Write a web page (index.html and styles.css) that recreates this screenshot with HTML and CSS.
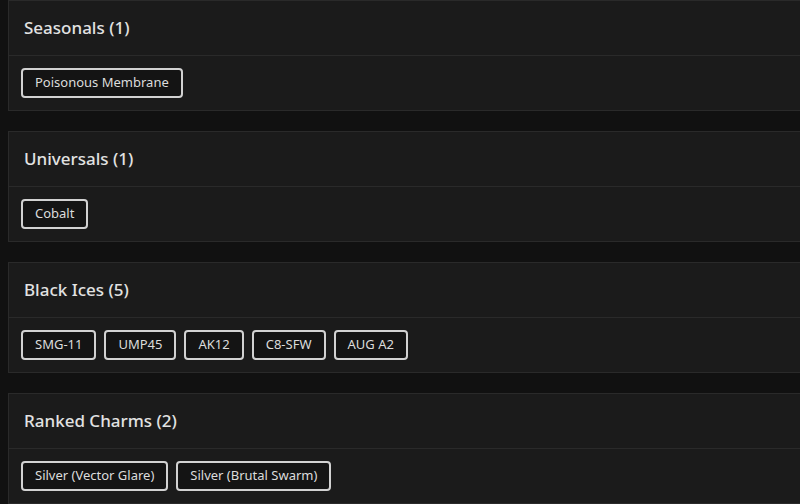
FILE: index.html
```html
<!DOCTYPE html>
<html lang="en">
<head>
    <meta charset="UTF-8">
    <meta name="viewport" content="width=device-width, initial-scale=1.0">
    <title>Collection</title>
    <link rel="stylesheet" href="styles.css">
</head>
<body>

    <div class="card">
        <div class="card-header">Seasonals (1)</div>
        <div class="card-body">
            <span class="tag">Poisonous Membrane</span>
        </div>
    </div>

    <div class="card">
        <div class="card-header">Universals (1)</div>
        <div class="card-body">
            <span class="tag">Cobalt</span>
        </div>
    </div>

    <div class="card">
        <div class="card-header">Black Ices (5)</div>
        <div class="card-body">
            <span class="tag">SMG-11</span>
            <span class="tag">UMP45</span>
            <span class="tag">AK12</span>
            <span class="tag">C8-SFW</span>
            <span class="tag">AUG A2</span>
        </div>
    </div>

    <div class="card">
        <div class="card-header">Ranked Charms (2)</div>
        <div class="card-body">
            <span class="tag">Silver (Vector Glare)</span>
            <span class="tag">Silver (Brutal Swarm)</span>
        </div>
    </div>

</body>
</html>
```

FILE: styles.css
```css
body {
    margin: 0;
    padding: 0 0 0 8px;
    background-color: #111111;
    font-family: "Noto Sans", sans-serif;
    color: #e2e2e2;
    overflow: hidden;
}
.card {
    width: 820px;
    background-color: #1b1b1b;
    border: 1px solid #2a2a2a;
    margin-bottom: 20px;
}
.card-header {
    height: 54px;
    line-height: 53px;
    padding: 0 15px;
    font-size: 17px;
    font-weight: 500;
    border-bottom: 1px solid #2a2a2a;
}
.card-body {
    display: flex;
    gap: 8px;
    padding: 12px;
}
.tag {
    height: 26px;
    line-height: 25px;
    padding: 0 12px;
    font-size: 13px;
    color: #dcdcdc;
    background-color: #141414;
    border: 2px solid #d2d2d2;
    border-radius: 4px;
}
```
